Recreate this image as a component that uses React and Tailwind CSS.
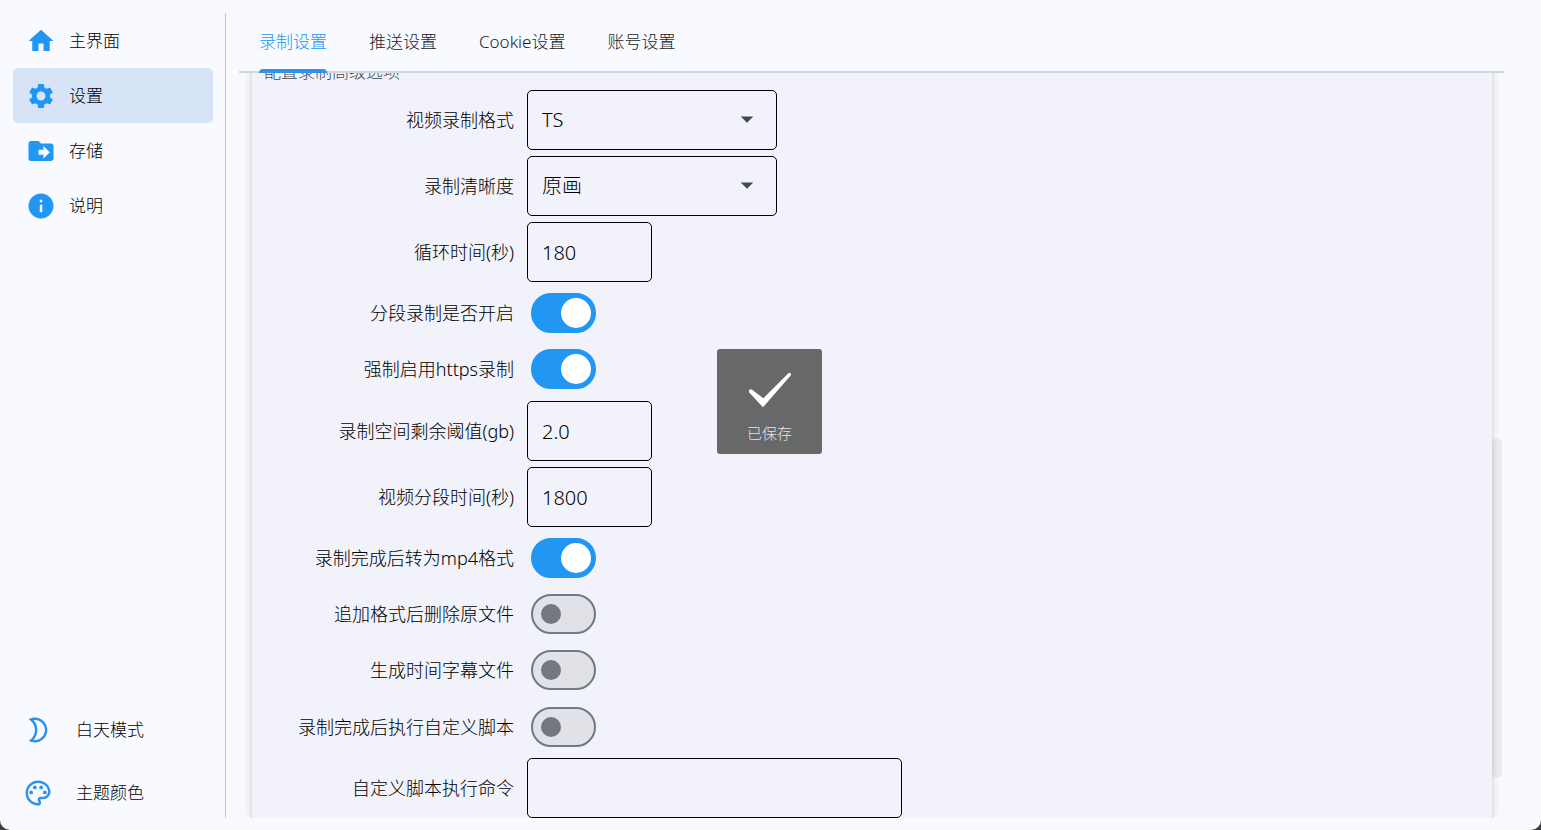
import { useState } from "react";
import {
  MdArrowDropDown,
  MdDriveFileMove,
  MdHome,
  MdInfo,
  MdOutlineModeNight,
  MdOutlinePalette,
  MdSettings,
} from "react-icons/md";

const navItems = [
  { label: "主界面", icon: MdHome },
  { label: "设置", icon: MdSettings },
  { label: "存储", icon: MdDriveFileMove },
  { label: "说明", icon: MdInfo },
];

const tabs = ["录制设置", "推送设置", "Cookie设置", "账号设置"];

const Row = ({ id, label, children }) => (
  <div className="flex items-center gap-[13px]">
    <label htmlFor={id} className="w-[250px] shrink-0 text-right text-lg whitespace-nowrap">
      {label}
    </label>
    {children}
  </div>
);

const SelectRow = ({ id, label, options }) => (
  <Row id={id} label={label}>
    <div className="relative w-[250px]">
      <select
        id={id}
        className="h-[60px] w-full appearance-none rounded-[5px] border border-black bg-transparent px-3.5 text-xl"
      >
        {options.map((option) => (
          <option key={option}>{option}</option>
        ))}
      </select>
      <MdArrowDropDown
        size={30}
        className="pointer-events-none absolute right-[15px] top-3.5 text-[#43474e]"
      />
    </div>
  </Row>
);

const InputRow = ({ id, label, value, wide }) => (
  <Row id={id} label={label}>
    <input
      id={id}
      type="text"
      defaultValue={value}
      className={`h-[60px] rounded-[5px] border border-black bg-transparent px-3.5 text-xl ${
        wide ? "w-[375px]" : "w-[125px]"
      }`}
    />
  </Row>
);

const SwitchRow = ({ id, label, on }) => (
  <Row id={id} label={label}>
    <div className="flex h-[50px] items-center pl-1">
      <input
        id={id}
        type="checkbox"
        role="switch"
        defaultChecked={on}
        className="flex h-10 w-[65px] appearance-none items-center rounded-full border-2 border-[#73777f] bg-[#e0e2e7] px-2 before:size-5 before:rounded-full before:bg-[#73777f] checked:justify-end checked:border-[#2196f3] checked:bg-[#2196f3] checked:px-[3px] checked:before:size-[30px] checked:before:bg-white"
      />
    </div>
  </Row>
);

const Toast = ({ text }) => (
  <div className="pointer-events-none fixed inset-0 flex items-center justify-center pr-0.5 pb-[27px]">
    <div
      role="status"
      className="flex size-[105px] flex-col items-center rounded-[3px] bg-[#67686a] pt-[23px] text-[15px] leading-5 text-[#e6e6e6]"
    >
      <svg width="44" height="36" viewBox="0 0 44 36" className="mb-[15px]" fill="#fff">
        <path d="M1.2 20.4 Q.2 19 1.4 17.8 Q2.7 16.6 4.2 17.7 L15.3 26.2 L40.4 1.3 Q41.6 .4 42.6 1.3 Q43.5 2.3 42.7 3.4 L15 35.3 Z" />
      </svg>
      {text}
    </div>
  </div>
);

const App = () => {
  const [page, setPage] = useState("设置");
  const [tab, setTab] = useState("录制设置");

  return (
    <div className="bg-[#3c3d3f] font-['Noto_Sans','Noto_Sans_CJK_SC',sans-serif] text-[17px] font-light text-black">
      <div className="flex h-screen overflow-hidden rounded-b-[10px] bg-[#f8faff] px-[13px] pt-[13px] pb-3">
        <aside className="flex w-[200px] shrink-0 flex-col justify-between">
          <nav>
            {navItems.map(({ label, icon: Icon }) => (
              <button
                key={label}
                type="button"
                onClick={() => setPage(label)}
                className={`flex h-[55px] w-full items-center gap-[13px] rounded-[5px] px-[13px] ${
                  page === label ? "bg-[#d7e3f7]" : ""
                }`}
              >
                <Icon size={30} className="text-[#2196f3]" />
                {label}
              </button>
            ))}
          </nav>
          <div className="flex flex-col gap-[13px]">
            <button type="button" className="flex h-[50px] items-center gap-[23px] px-2.5">
              <MdOutlineModeNight size={30} className="text-[#2f92e6]" />
              白天模式
            </button>
            <button type="button" className="flex h-[50px] items-center gap-[23px] px-2.5">
              <MdOutlinePalette size={30} className="text-[#2f92e6]" />
              主题颜色
            </button>
          </div>
        </aside>

        <div className="mr-[13px] ml-3 w-px shrink-0 bg-[#c3c7cf]" />

        <main className="mr-6 flex min-w-0 flex-1 flex-col">
          <div
            role="tablist"
            className="flex h-[60px] shrink-0 gap-[42px] border-b-2 border-[#d3d6dc] px-5"
          >
            {tabs.map((name) => (
              <button
                key={name}
                type="button"
                role="tab"
                aria-selected={tab === name}
                onClick={() => setTab(name)}
                className={`relative h-[58px] ${
                  tab === name
                    ? "text-[#2196f3] after:absolute after:inset-x-0 after:-bottom-0.5 after:z-10 after:h-1 after:rounded-t after:bg-[#2f92e6]"
                    : "text-[#1a1c1e]"
                }`}
              >
                {name}
              </button>
            ))}
          </div>

          <div className="relative flex min-h-0 flex-1 flex-col justify-end overflow-hidden">
            <form className="mr-3 ml-[13px] bg-[#f1f2fa] px-3 pt-12 shadow-[0_0_0_2px_#e3e5ea,0_0_8px_2px_rgba(0,0,0,0.1)]">
              <p className="mb-1.5 leading-6 text-[#43474e]">配置录制高级选项</p>
              <div className="flex flex-col gap-[7px]">
                <div className="flex flex-col gap-1.5">
                  <SelectRow id="format" label="视频录制格式" options={["TS", "MP4", "FLV", "MKV"]} />
                  <SelectRow id="quality" label="录制清晰度" options={["原画", "超清", "高清", "标清"]} />
                  <InputRow id="loop" label="循环时间(秒)" value="180" />
                  <SwitchRow id="segment" label="分段录制是否开启" on />
                  <SwitchRow id="https" label="强制启用https录制" on />
                </div>
                <div className="flex flex-col gap-1.5">
                  <InputRow id="space" label="录制空间剩余阈值(gb)" value="2.0" />
                  <InputRow id="segment-time" label="视频分段时间(秒)" value="1800" />
                  <SwitchRow id="to-mp4" label="录制完成后转为mp4格式" on />
                  <SwitchRow id="delete-origin" label="追加格式后删除原文件" />
                  <SwitchRow id="subtitle" label="生成时间字幕文件" />
                </div>
                <div className="flex flex-col gap-1.5">
                  <SwitchRow id="run-script" label="录制完成后执行自定义脚本" />
                  <InputRow id="script" label="自定义脚本执行命令" value="" wide />
                </div>
              </div>
            </form>
            {/* scrollbar thumb */}
            <div className="absolute top-[49%] right-0.5 h-[340px] w-2.5 rounded-[5px] bg-black/5" />
          </div>
        </main>
      </div>

      <Toast text="已保存" />
    </div>
  );
};

export default App;
